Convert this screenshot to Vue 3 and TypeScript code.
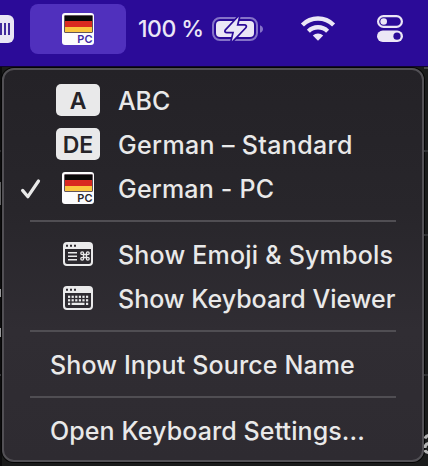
<script setup lang="ts">
interface MenuItem {
  label: string
  badge?: string
  icon?: 'flag' | 'emoji' | 'keyboard'
  checked?: boolean
  fit: string
}

const groups: MenuItem[][] = [
  [
    { label: 'ABC', badge: 'A', fit: 'fit-abc' },
    { label: 'German – Standard', badge: 'DE', fit: 'fit-standard' },
    { label: 'German - PC', icon: 'flag', checked: true, fit: 'fit-pc' },
  ],
  [
    { label: 'Show Emoji & Symbols', icon: 'emoji', fit: 'fit-emoji' },
    { label: 'Show Keyboard Viewer', icon: 'keyboard', fit: 'fit-viewer' },
  ],
  [{ label: 'Show Input Source Name', fit: 'fit-source' }],
  [{ label: 'Open Keyboard Settings...', fit: 'fit-settings' }],
]
const keyColumns = [0, 1, 2, 3, 4, 5]
</script>

<template>
  <div class="screen">
    <header class="menubar">
      <div class="clipped"><i /><i /><i /></div>
      <div class="active">
        <div class="flag on-bar"><span class="stripes"><b /><b /><b /></span><span class="code">PC</span></div>
      </div>
      <span class="percent">100 %</span>
      <svg class="battery" width="52" height="28" viewBox="0 0 52 28">
        <rect x="1" y="3" width="44" height="22" rx="7" fill="none" stroke="#8573c8" stroke-width="2" />
        <rect x="4" y="6" width="38" height="16" rx="4" fill="#ebe7f6" />
        <path d="M48 10.200c4 1.400 4 6.200 0 7.600z" fill="#8573c8" />
        <path d="M26.800 1.800L14 15.500q-.8 1.300.9 1.300h7.200L19.800 26.300 33.200 12.200q.9-1.400-.8-1.400h-7.800z" fill="#ebe7f6" stroke="#2b0b98" stroke-width="3.400" stroke-linejoin="round" paint-order="stroke" />
      </svg>
      <svg class="wifi" width="36" height="28" viewBox="0 0 36 28">
        <g fill="none" stroke="#ebe7f6" stroke-width="4.300">
          <path d="M2.400 11a22 22 0 0 1 31.200 0" />
          <path d="M8.400 17.200a13.700 13.700 0 0 1 19.200 0" />
        </g>
        <path d="M18 26.800l-5.200-5.200a7.400 7.400 0 0 1 10.400 0z" fill="#ebe7f6" />
      </svg>
      <svg class="toggles" width="28" height="28" viewBox="0 0 28 28">
        <rect x="2.100" y="2.100" width="23.800" height="10.800" rx="5.400" fill="none" stroke="#ebe7f6" stroke-width="2.200" />
        <circle cx="7.700" cy="7.500" r="3.300" fill="#ebe7f6" />
        <rect x="1" y="16.500" width="26" height="11.500" rx="5.750" fill="#ebe7f6" />
        <circle cx="21" cy="22.200" r="3.600" fill="#2b0b98" />
      </svg>
    </header>

    <main class="backdrop">
      <div class="peek-left"><i class="dim" /><i class="field" /><i class="glyph-a" /><i class="glyph-b" /><i class="rule" /></div>
      <nav class="menu">
        <section v-for="(group, g) in groups" :key="g">
          <hr v-if="g > 0" />
          <div v-for="item in group" :key="item.label" class="row" :class="{ plain: !item.badge && !item.icon }">
            <span v-if="item.badge || item.icon" class="check">
              <svg v-if="item.checked" width="22" height="22" viewBox="0 0 22 22">
                <path d="M2.600 12.400l5.300 6.300L18.500 3" fill="none" stroke="#e9e9e9" stroke-width="3.200" stroke-linecap="round" stroke-linejoin="round" />
              </svg>
            </span>
            <span v-if="item.badge || item.icon" class="slot">
              <span v-if="item.badge" class="badge">{{ item.badge }}</span>
              <span v-else-if="item.icon === 'flag'" class="flag"><span class="stripes"><b /><b /><b /></span><span class="code">PC</span></span>
              <svg v-else class="window" width="30" height="24" viewBox="0 0 30 24">
                <rect x="1" y="1" width="28" height="22" rx="3" fill="none" stroke="#eaeaeb" stroke-width="2" />
                <path d="M1 7V3.500Q1 1 3.500 1h23Q29 1 29 3.500V7z" fill="#eaeaeb" />
                <path d="M3 2.700h2v2H3zM7 2.700h2v2H7zM11 2.700h2v2h-2z" fill="#2c292f" />
                <g v-if="item.icon === 'emoji'" fill="none" stroke="#eaeaeb">
                  <path d="M5 10.700h9M5 14.200h9M5 17.700h9" stroke-width="1.500" />
                  <path d="M20.500 12.500h3v3h-3z" stroke-width="1.300" />
                  <g stroke-width="1.300">
                    <circle cx="19.200" cy="11.200" r="1.400" />
                    <circle cx="24.800" cy="11.200" r="1.400" />
                    <circle cx="19.200" cy="16.800" r="1.400" />
                    <circle cx="24.800" cy="16.800" r="1.400" />
                  </g>
                </g>
                <g v-else fill="#eaeaeb">
                  <template v-for="c in keyColumns" :key="c">
                    <rect :x="5 + c * 3.600" y="9.700" width="2.200" height="2.200" />
                    <rect :x="5 + c * 3.600" y="13.200" width="2.200" height="2.200" />
                  </template>
                  <path d="M5 16.800h2.200v2.200H5zM8.600 16.800h12.900v2.200H8.600zM23 16.800h2.200v2.200H23z" />
                </g>
              </svg>
            </span>
            <span class="label" :class="item.fit">{{ item.label }}</span>
          </div>
        </section>
      </nav>
      <div class="peek-right">
        <i class="line-a" /><i class="line-b" /><i class="line-c" />
        <svg width="4" height="22" viewBox="0 0 4 22">
          <path d="M1 4.500Q2 1.500 5 1.500M5 9.500Q1 9.500 1 14M1 16Q1.500 18.500 5 18.500" fill="none" stroke="#b4b4b4" stroke-width="3" />
        </svg>
      </div>
    </main>
  </div>
</template>

<style>
body { margin: 0; }
</style>

<style scoped>
.screen {
  width: 428px;
  height: 466px;
  overflow: hidden;
  background: #1a1b1b;
  color: #e9e9e9;
  font-family: Inter, "Liberation Sans", sans-serif;
}
.menubar {
  box-sizing: border-box;
  height: 67px;
  display: flex;
  align-items: flex-start;
  background: #2b0b98;
  border-bottom: 1px solid #10052f;
}
.menubar > * { flex: none; }
.clipped {
  display: flex;
  gap: 2px;
  box-sizing: border-box;
  width: 14px;
  height: 28px;
  margin-top: 15px;
  padding: 8px 0;
  border-radius: 0 6px 6px 0;
  background: #e9e6f4;
}
.clipped i { width: 2px; height: 12px; background: #412a9c; }
.active {
  display: flex;
  justify-content: center;
  width: 96px;
  height: 50px;
  margin: 4px 0 0 16px;
  border-radius: 8px;
  background: #5030bd;
}
.active .flag { margin-top: 9px; }
.percent {
  width: 74px;
  margin: 15px 0 0 12px;
  font-size: 23px;
  line-height: 28px;
  font-weight: 500;
  letter-spacing: -0.500px;
  color: #ebe7f6;
  white-space: nowrap;
}
.battery { margin: 15px 0 0; }
.wifi { margin: 14px 0 0 36px; }
.toggles { margin: 14px 0 0 40px; }
.flag {
  position: relative;
  display: block;
  box-sizing: border-box;
  width: 32px;
  height: 32px;
  padding: 1.500px;
  border-radius: 3px;
  background: #fcfcfd;
  color: #29272c;
}
.on-bar { color: #432aa5; }
.stripes {
  display: grid;
  grid-template-rows: 5px 6px 5px;
  border: 1px solid #63545c;
  border-radius: 1px;
}
.stripes b:nth-child(1) { background: #090909; }
.stripes b:nth-child(2) { background: #d92a20; }
.stripes b:nth-child(3) { background: #fac63f; }
.code {
  position: absolute;
  right: 1.500px;
  bottom: 1px;
  font-size: 11px;
  line-height: 10px;
  font-weight: 600;
}
.backdrop { display: flex; height: 399px; background: #1a1b1b; }
.peek-left { display: flex; flex-direction: column; width: 2px; background: #0c0c0d; }
.peek-left i { width: 2px; }
.dim { height: 2px; margin-top: 83px; background: #28282a; }
.field { height: 23px; margin-top: 30px; background: #636365; }
.glyph-a { height: 8px; margin-top: 84px; background: #9a9a9c; }
.glyph-b { height: 9px; margin-top: 31px; background: #9a9a9c; }
.rule { height: 2px; margin-top: 37px; background: #353538; }
.menu {
  box-sizing: border-box;
  width: 422px;
  height: 394px;
  margin-top: 1px;
  padding-top: 9px;
  border: 2px solid #525055;
  border-radius: 12px;
  background: linear-gradient(#242227, #28262b 36%, #302d33 67%, #2e2b31);
  box-shadow: 0 0 0 1px #050505;
}
hr {
  width: 366px;
  height: 2px;
  margin: 9px 0 11px 26px;
  border: 0;
  background: #504e53;
}
.row { display: flex; align-items: center; height: 44px; }
.plain { padding-left: 46px; }
.check { display: flex; box-sizing: border-box; width: 36px; padding-left: 16px; }
.check svg { flex: none; }
.slot { display: flex; justify-content: center; align-items: center; width: 76px; margin-right: 2px; }
.window { margin-top: -2px; }
.badge {
  width: 44px;
  height: 32px;
  margin-top: -2px;
  border-radius: 5px;
  background: #e9e9ea;
  color: #252328;
  font-size: 23px;
  line-height: 34px;
  font-weight: 600;
  text-align: center;
}
.slot .flag { margin-top: -2px; }
.label { font-size: 25px; line-height: 44px; font-weight: 500; white-space: nowrap; }
.fit-abc { letter-spacing: -0.100px; }
.fit-standard { letter-spacing: 0.350px; }
.fit-pc { letter-spacing: 0.200px; }
.fit-emoji { letter-spacing: 0.210px; }
.fit-source { letter-spacing: 0.130px; }
.fit-settings { letter-spacing: 0.100px; }
.peek-right {
  display: flex;
  flex-direction: column;
  box-sizing: border-box;
  width: 4px;
  overflow: hidden;
  border-top: 2px solid #454548;
}
.peek-right i { height: 2px; background: #303133; }
.peek-right svg { flex: none; margin-top: 58px; }
.line-a { margin-top: 81px; }
.line-b { margin-top: 82px; }
.line-c { margin-top: 138px; }
</style>
